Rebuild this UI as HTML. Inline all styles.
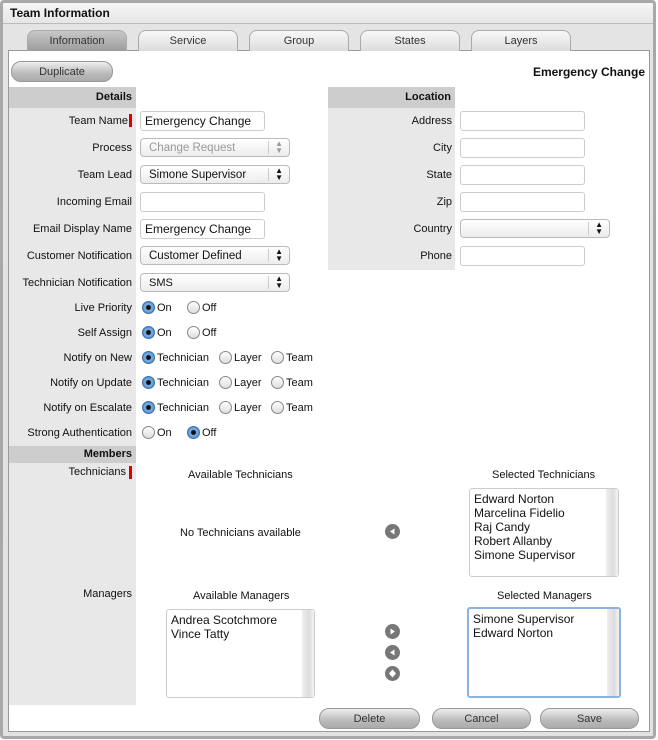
<!DOCTYPE html>
<html><head><meta charset="utf-8"><style>
*{box-sizing:border-box}
body{margin:0;width:658px;height:740px;background:#fff;font-family:"Liberation Sans",sans-serif;font-size:11px;color:#111;position:relative;overflow:hidden}
.a{position:absolute}
.frame{left:0;top:0;width:656px;height:739px;border:3px solid #a8a8a8;border-radius:4px;background:linear-gradient(#f6f6f6,#e4e4e4 22px,#e2e2e2)}
.title{left:10px;top:6px;font-weight:bold;font-size:12px}
.titleline{left:3px;top:23px;width:650px;height:1px;background:#bbb}
.content{left:8px;top:50px;width:642px;height:682px;background:#fff;border:1px solid #999}
.tab{top:30px;height:21px;width:100px;border:1px solid #aaa;border-bottom:none;border-radius:8px 8px 0 0;background:linear-gradient(#f8f8f8,#dcdcdc);text-align:center;line-height:21px;color:#333}
.tab.on{background:linear-gradient(#c8c8c8,#9c9c9c);color:#333}
.btn{height:21px;border-radius:10px;border:1px solid #999;background:linear-gradient(#eee,#bbb 60%,#aaa);text-align:center;line-height:20px;color:#333}
.lab{text-align:right;width:124px;left:8px}
.col{background:#e8e8e8}
.hdr{background:#cdcdcd;font-weight:bold;text-align:right;padding-right:4px;line-height:21px}
.in{height:20px;border:1px solid #ccc;border-radius:3px;background:#fff;padding-left:4px;line-height:18px;font-size:12px}
.sel{height:19px;border:1px solid #bbb;border-radius:4px;background:linear-gradient(#fff,#ececec);padding-left:8px;line-height:18px;font-size:11.5px}
.sel:after{content:"";position:absolute;right:20px;top:2px;bottom:2px;width:1px;background:#ccc}
.sel i{position:absolute;right:6px;top:1px;font-style:normal;font-size:8px;line-height:7px;text-align:center}
.r{width:13px;height:13px;border-radius:50%;border:1px solid #888;background:linear-gradient(#fff,#ddd)}
.r.c{border-color:#3a6fa8;background:radial-gradient(circle,#111 0 2px,#7fb3e6 3px,#3b82c8 7px)}
.lb{border:1px solid #ccc;border-radius:3px;background:#fff;padding:3px 4px;font-size:12px;line-height:14px}
.lb:after{content:"";position:absolute;right:0;top:0;bottom:0;width:12px;background:linear-gradient(90deg,#eee,#ddd 60%,#f4f4f4)}
.ar{width:15px;height:15px;border-radius:50%;background:#777}
</style></head><body>
<div class="a frame"></div>
<div class="a title">Team Information</div>
<div class="a titleline"></div>
<div class="a content"></div>
<div class="a tab on" style="left:27px">Information</div>
<div class="a tab" style="left:138px">Service</div>
<div class="a tab" style="left:249px">Group</div>
<div class="a tab" style="left:360px">States</div>
<div class="a tab" style="left:471px">Layers</div>
<div class="a btn" style="left:11px;top:61px;width:102px">Duplicate</div>
<div class="a" style="right:13px;top:65px;font-weight:bold;font-size:12px">Emergency Change</div>

<div class="a col" style="left:9px;top:87px;width:127px;height:618px"></div>
<div class="a hdr" style="left:9px;top:87px;width:127px;height:21px">Details</div>
<div class="a hdr" style="left:9px;top:446px;width:127px;height:17px;line-height:17px">Members</div>
<div class="a col" style="left:328px;top:87px;width:127px;height:183px"></div>
<div class="a hdr" style="left:328px;top:87px;width:127px;height:21px">Location</div>

<div class="a lab" style="top:115px;width:120px">Team Name</div><div class="a" style="left:129px;top:114px;width:3px;height:13px;background:#d00"></div>
<div class="a lab" style="top:142px">Process</div>
<div class="a lab" style="top:169px">Team Lead</div>
<div class="a lab" style="top:196px">Incoming Email</div>
<div class="a lab" style="top:223px">Email Display Name</div>
<div class="a lab" style="top:250px">Customer Notification</div>
<div class="a lab" style="top:277px">Technician Notification</div>
<div class="a lab" style="top:302px">Live Priority</div>
<div class="a lab" style="top:327px">Self Assign</div>
<div class="a lab" style="top:352px">Notify on New</div>
<div class="a lab" style="top:377px">Notify on Update</div>
<div class="a lab" style="top:402px">Notify on Escalate</div>
<div class="a lab" style="top:427px">Strong Authentication</div>
<div class="a lab" style="top:466px;width:118px">Technicians</div><div class="a" style="left:129px;top:466px;width:3px;height:13px;background:#d00"></div>
<div class="a lab" style="top:588px">Managers</div>

<div class="a in" style="left:140px;top:111px;width:125px">Emergency Change</div>
<div class="a sel" style="left:140px;top:138px;width:150px;color:#999">Change Request<i>▲<br>▼</i></div>
<div class="a sel" style="left:140px;top:165px;width:150px">Simone Supervisor<i>▲<br>▼</i></div>
<div class="a in" style="left:140px;top:192px;width:125px"></div>
<div class="a in" style="left:140px;top:219px;width:125px">Emergency Change</div>
<div class="a sel" style="left:140px;top:246px;width:150px">Customer Defined<i>▲<br>▼</i></div>
<div class="a sel" style="left:140px;top:273px;width:150px;font-size:11px">SMS<i>▲<br>▼</i></div>

<div class="a r c" style="left:142px;top:301px"></div><div class="a" style="left:157px;top:302px">On</div>
<div class="a r" style="left:187px;top:301px"></div><div class="a" style="left:202px;top:302px">Off</div>
<div class="a r c" style="left:142px;top:326px"></div><div class="a" style="left:157px;top:327px">On</div>
<div class="a r" style="left:187px;top:326px"></div><div class="a" style="left:202px;top:327px">Off</div>
<div class="a r c" style="left:142px;top:351px"></div><div class="a" style="left:157px;top:352px">Technician</div>
<div class="a r" style="left:219px;top:351px"></div><div class="a" style="left:234px;top:352px">Layer</div>
<div class="a r" style="left:271px;top:351px"></div><div class="a" style="left:286px;top:352px">Team</div>
<div class="a r c" style="left:142px;top:376px"></div><div class="a" style="left:157px;top:377px">Technician</div>
<div class="a r" style="left:219px;top:376px"></div><div class="a" style="left:234px;top:377px">Layer</div>
<div class="a r" style="left:271px;top:376px"></div><div class="a" style="left:286px;top:377px">Team</div>
<div class="a r c" style="left:142px;top:401px"></div><div class="a" style="left:157px;top:402px">Technician</div>
<div class="a r" style="left:219px;top:401px"></div><div class="a" style="left:234px;top:402px">Layer</div>
<div class="a r" style="left:271px;top:401px"></div><div class="a" style="left:286px;top:402px">Team</div>
<div class="a r" style="left:142px;top:426px"></div><div class="a" style="left:157px;top:427px">On</div>
<div class="a r c" style="left:187px;top:426px"></div><div class="a" style="left:202px;top:427px">Off</div>

<div class="a lab" style="left:328px;top:115px">Address</div>
<div class="a lab" style="left:328px;top:142px">City</div>
<div class="a lab" style="left:328px;top:169px">State</div>
<div class="a lab" style="left:328px;top:196px">Zip</div>
<div class="a lab" style="left:328px;top:223px">Country</div>
<div class="a lab" style="left:328px;top:250px">Phone</div>
<div class="a in" style="left:460px;top:111px;width:125px"></div>
<div class="a in" style="left:460px;top:138px;width:125px"></div>
<div class="a in" style="left:460px;top:165px;width:125px"></div>
<div class="a in" style="left:460px;top:192px;width:125px"></div>
<div class="a sel" style="left:460px;top:219px;width:150px"><i>▲<br>▼</i></div>
<div class="a in" style="left:460px;top:246px;width:125px"></div>

<div class="a" style="left:188px;top:469px">Available Technicians</div>
<div class="a" style="left:492px;top:469px">Selected Technicians</div>
<div class="a" style="left:180px;top:527px">No Technicians available</div>
<div class="a ar" style="left:385px;top:524px"></div>
<div class="a lb" style="left:469px;top:488px;width:150px;height:89px">Edward Norton<br>Marcelina Fidelio<br>Raj Candy<br>Robert Allanby<br>Simone Supervisor</div>

<div class="a" style="left:193px;top:590px">Available Managers</div>
<div class="a" style="left:497px;top:590px">Selected Managers</div>
<div class="a lb" style="left:166px;top:609px;width:149px;height:89px">Andrea Scotchmore<br>Vince Tatty</div>
<div class="a lb" style="left:467px;top:607px;width:154px;height:91px;border:2px solid #8ab4de">Simone Supervisor<br>Edward Norton</div>
<div class="a ar" style="left:385px;top:624px"></div>
<div class="a ar" style="left:385px;top:645px"></div>
<div class="a ar" style="left:385px;top:666px"></div>
<svg class="a" style="left:385px;top:524px" width="15" height="15"><path d="M9.5 4.5v6L5 7.5z" fill="#fff"/></svg>
<svg class="a" style="left:385px;top:624px" width="15" height="15"><path d="M5.5 4.5v6L10 7.5z" fill="#fff"/></svg>
<svg class="a" style="left:385px;top:645px" width="15" height="15"><path d="M9.5 4.5v6L5 7.5z" fill="#fff"/></svg>
<svg class="a" style="left:385px;top:666px" width="15" height="15"><path d="M7.5 3.5L11 7.5 7.5 11.5 4 7.5z" fill="#fff"/></svg>

<div class="a btn" style="left:319px;top:708px;width:101px">Delete</div>
<div class="a btn" style="left:432px;top:708px;width:99px">Cancel</div>
<div class="a btn" style="left:540px;top:708px;width:99px">Save</div>
</body></html>
